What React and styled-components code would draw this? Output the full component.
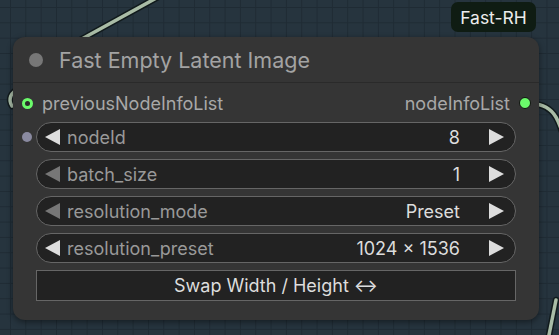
import React from 'react';
import styled, { createGlobalStyle } from 'styled-components';

const GlobalStyle = createGlobalStyle`
  html, body {
    margin: 0;
    padding: 0;
    background: #25323c;
  }
  * { box-sizing: border-box; }
`;

const widgets = [
  { name: 'nodeId', value: '8', leftOn: true, slot: true },
  { name: 'batch_size', value: '1', leftOn: false },
  { name: 'resolution_mode', value: 'Preset', leftOn: false },
  { name: 'resolution_preset', value: '1024 × 1536', leftOn: true },
];

const App = () => {
  return (
    <>
      <GlobalStyle />
      <Canvas>
        <Links width="559" height="335" viewBox="0 0 559 335">
          <g fill="none" strokeLinecap="round">
            <path d="M160 -4 L80 40" stroke="#111a1c" strokeWidth="6.5" />
            <path d="M160 -4 L80 40" stroke="#a9bca6" strokeWidth="3.5" />
            <path d="M20 88 C10 92 8 100 12 106" stroke="#111a1c" strokeWidth="6.5" />
            <path d="M20 88 C10 92 8 100 12 106" stroke="#a9bca6" strokeWidth="3.5" />
            <path d="M532 104 C555 104 560 120 570 160" stroke="#111a1c" strokeWidth="6.5" />
            <path d="M532 104 C555 104 560 120 570 160" stroke="#a9bca6" strokeWidth="3.5" />
            <path d="M556 300 L548 340" stroke="#111a1c" strokeWidth="6.5" />
            <path d="M556 300 L548 340" stroke="#a9bca6" strokeWidth="3.5" />
          </g>
        </Links>

        <Badge>Fast-RH</Badge>

        <Node>
          <TitleBar>
            <TitleDot />
            <Title>Fast Empty Latent Image</Title>
          </TitleBar>

          <Body>
            <SlotRow>
              <SlotSide>
                <InputDot />
                <SlotLabel>previousNodeInfoList</SlotLabel>
              </SlotSide>
              <SlotSide>
                <SlotLabel>nodeInfoList</SlotLabel>
                <OutputDot />
              </SlotSide>
            </SlotRow>

            {widgets.map((w) => (
              <Widget key={w.name}>
                {w.slot && <WidgetSlot />}
                <Arrow $dir="left" $on={w.leftOn} />
                <WidgetName>{w.name}</WidgetName>
                <WidgetValue>{w.value}</WidgetValue>
                <Arrow $dir="right" $on />
              </Widget>
            ))}

            <SwapButton>Swap Width / Height ↔</SwapButton>
          </Body>
        </Node>
      </Canvas>
    </>
  );
};

export default App;

const Canvas = styled.div`
  position: relative;
  width: 559px;
  height: 335px;
  overflow: hidden;
  background-color: #26343e;
  background-image:
    linear-gradient(to right, #1f2b34 1px, transparent 1px),
    linear-gradient(to bottom, #1f2b34 1px, transparent 1px);
  background-size: 15.33px 15.33px;
  background-position: 10px 7px;
  font-family: Inter, "Noto Sans", sans-serif;
`;

const Links = styled.svg`
  position: absolute;
  left: 0;
  top: 0;
`;

const Badge = styled.div`
  position: absolute;
  left: 451px;
  top: 2px;
  width: 85px;
  height: 30px;
  border-radius: 7px;
  background: #0f1c13;
  color: #ececec;
  font-size: 17.5px;
  display: flex;
  align-items: center;
  justify-content: center;
`;

const Node = styled.div`
  position: absolute;
  left: 13px;
  top: 37px;
  width: 526px;
  height: 283px;
  background: #353535;
  border-radius: 12px;
  box-shadow: 0 2px 6px rgba(0, 0, 0, 0.45);
  display: flex;
  flex-direction: column;
`;

const TitleBar = styled.div`
  height: 46px;
  display: flex;
  align-items: center;
  gap: 16px;
  padding-left: 16px;
  border-bottom: 1px solid #2a2a2a;
`;

const TitleDot = styled.span`
  width: 14px;
  height: 14px;
  border-radius: 50%;
  background: #777;
`;

const Title = styled.span`
  color: #a3a3a3;
  font-size: 21.5px;
`;

const Body = styled.div`
  display: flex;
  flex-direction: column;
  padding: 0 23px 0 23px;
`;

const SlotRow = styled.div`
  height: 39px;
  margin: 0 -14px 0 -14px;
  padding-top: 1px;
  display: flex;
  align-items: center;
  justify-content: space-between;
`;

const SlotSide = styled.div`
  display: flex;
  align-items: center;
  gap: 9px;
`;

const SlotLabel = styled.span`
  color: #a8a8a8;
  font-size: 18px;
`;

const InputDot = styled.span`
  width: 11px;
  height: 11px;
  border-radius: 50%;
  border: 3px solid #6bfb6b;
  background: #2a2a2a;
`;

const OutputDot = styled.span`
  width: 12px;
  height: 12px;
  border-radius: 50%;
  background: #6bfb6b;
  border: 1.5px solid #111;
  margin-right: -1px;
`;

const Widget = styled.div`
  position: relative;
  height: 30px;
  margin-bottom: 7px;
  display: flex;
  align-items: center;
  background: #222;
  border: 1px solid #666;
  border-radius: 15px;
  padding: 0 11px 0 8px;
  font-size: 18px;
`;

const WidgetSlot = styled.span`
  position: absolute;
  left: -15px;
  top: 9px;
  width: 10px;
  height: 10px;
  border-radius: 50%;
  background: #8a8aa0;
`;

const Arrow = styled.span`
  width: 0;
  height: 0;
  border-top: 8px solid transparent;
  border-bottom: 8px solid transparent;
  ${(p) =>
    p.$dir === 'left'
      ? `border-right: 15px solid ${p.$on ? '#ddd' : '#777'}; margin-right: 7px;`
      : `border-left: 15px solid ${p.$on ? '#ddd' : '#777'}; margin-left: 29px;`}
`;

const WidgetName = styled.span`
  color: #999;
  flex: 1;
`;

const WidgetValue = styled.span`
  color: #ddd;
`;

const SwapButton = styled.div`
  height: 31px;
  background: #222;
  border: 1px solid #666;
  color: #ddd;
  font-size: 18px;
  display: flex;
  align-items: center;
  justify-content: center;
`;
